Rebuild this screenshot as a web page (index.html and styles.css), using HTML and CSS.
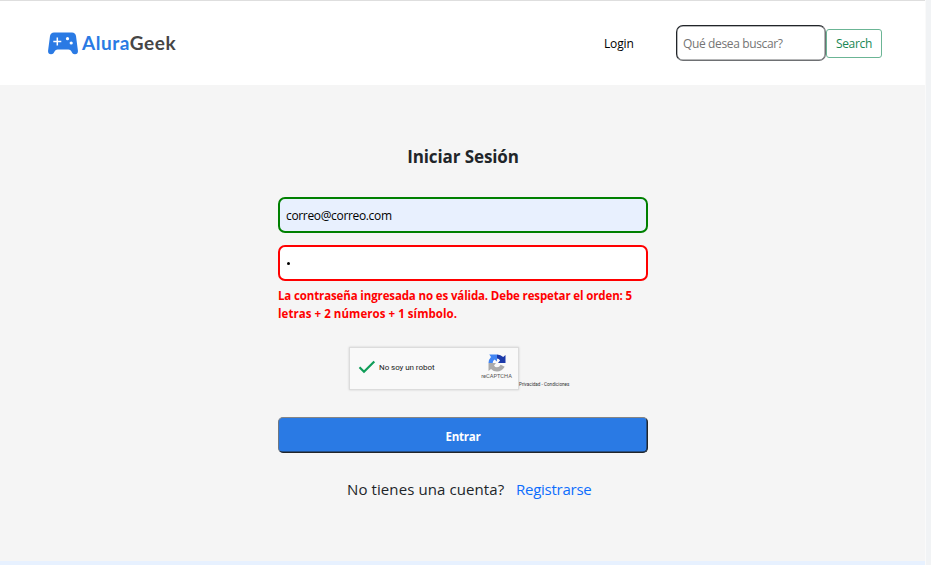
FILE: index.html
```html
<!DOCTYPE html>
<html lang="es">
<head>
<meta charset="utf-8">
<title>AluraGeek</title>
<link rel="stylesheet" href="styles.css">
</head>
<body>
<div class="page">
  <header class="header">
    <a class="logo">
      <svg class="logo-icon" width="30" height="23" viewBox="0 0 30 23">
        <path fill="#2a7ae4" d="M6 .5H24Q27.3.5 28 4L29.9 18.5Q30.3 22.3 27 22.3C24.8 22.3 24.3 21.1 23.3 19.3Q22.5 17.5 20.5 17.5H9.5Q7.5 17.5 6.700 19.300C5.700 21.100 5.200 22.300 3 22.300Q-.3 22.300.1 18.500L2 4Q2.700.5 6 .5Z"/>
        <path stroke="#fff" stroke-width="1.500" d="M9.300 5.500V13.500M5.300 9.500H13.300"/>
        <g fill="#fff"><circle cx="19.500" cy="6.700" r="1.600"/><circle cx="23.200" cy="11" r="1.600"/></g>
      </svg>
      <span class="logo-text">Alura<span class="logo-dark">Geek</span></span>
    </a>
    <a class="login">Login</a>
    <form class="search">
      <input class="search-input" type="text" placeholder="Qué desea buscar?">
      <button class="search-button" type="button">Search</button>
    </form>
  </header>
  <main class="main">
    <h1 class="title">Iniciar Sesión</h1>
    <div class="field field-valid">correo@correo.com</div>
    <div class="field field-invalid"><i class="dot"></i></div>
    <p class="error"><span class="error-first">La contraseña ingresada no es válida. Debe respetar el orden: 5</span><br><span class="error-second">letras + 2 números + 1 símbolo.</span></p>
    <div class="captcha-row">
      <div class="captcha">
        <svg class="check" width="18" height="14" viewBox="0 0 18 14"><path d="M1.500 7.300 6 11.700 16.300 1.500" fill="none" stroke="#0f9d58" stroke-width="2.200"/></svg>
        <span class="robot">No soy un robot</span>
        <span class="brand">
          <svg width="18" height="18" viewBox="0 0 18 18">
            <path fill="#1c3aa9" d="M9 .5Q12.500.4 15.200 3L17.500 1V9H10L12.100 6.500Q11 4.500 9 4.500Z"/>
            <path fill="#4285f4" d="M9 .5V7.500L6.500 5.600Q4.700 6.800 4.700 9H.5Q.5 5.500 3 3L1.300.5Z"/>
            <path fill="#ababab" d="M.5 9H8L6 11.400Q7 13.300 9 13.300Q11.300 13.300 12.700 10.800L16.700 12.800Q13.800 17.500 9 17.500Q5.500 17.500 3 15L.5 17Z"/>
          </svg>
          <span class="brand-text">reCAPTCHA</span>
        </span>
      </div>
      <span class="terms">Privacidad - Condiciones</span>
    </div>
    <button class="submit" type="button">Entrar</button>
    <p class="signup"><span class="question">No tienes una cuenta?</span><a class="register">Registrarse</a></p>
  </main>
  <footer class="footer"></footer>
</div>
</body>
</html>
```
FILE: styles.css
```css
* { box-sizing: border-box; }
body {
  margin: 0;
  background: #f1f3f5;
  font-family: "Open Sans", "Noto Sans", sans-serif;
  font-size: 12px;
  color: #212529;
}
.page {
  width: 926px;
  height: 565px;
  display: flex;
  flex-direction: column;
  background: #f5f5f5;
  border-right: 1px solid #fafafa;
}
.header {
  height: 85px;
  flex: none;
  display: flex;
  align-items: center;
  padding: 0 44px 0 48px;
  background: #fff;
  border-top: 1px solid #dedede;
}
.logo { display: flex; align-items: center; gap: 4px; width: 556px; flex: none; }
.logo-text {
  font: 700 19px/24px "Lato", sans-serif;
  letter-spacing: .55px;
  color: #2a7ae4;
}
.logo-dark { color: #464646; }
.login { width: 72px; flex: none; color: #000; letter-spacing: -.15px; }
.search { display: flex; align-items: center; flex: none; }
.search-input {
  width: 150px;
  height: 36px;
  padding: 0 6px;
  background: #fff;
  border: 1px solid;
  border-color: #212529 #6e7073 #6e7073 #212529;
  border-radius: 7px;
  box-shadow: inset 0 0 0 .5px #6e7073;
  font: inherit;
  letter-spacing: -.36px;
}
.search-input::placeholder { color: #757575; }
.search-button {
  width: 56px;
  height: 29px;
  padding: 0;
  background: #fff;
  border: 1px solid #6bb595;
  border-radius: 3px;
  font: inherit;
  letter-spacing: -.3px;
  color: #198754;
}
.main {
  flex: 1;
  width: 370px;
  margin-left: 278px;
  display: flex;
  flex-direction: column;
}
.title {
  margin: 58px 0 26px;
  font-size: 17px;
  line-height: 28px;
  font-weight: 700;
  letter-spacing: -.1px;
  text-align: center;
}
.field {
  height: 36px;
  flex: none;
  display: flex;
  align-items: center;
  padding: 0 6px;
  border: 2px solid green;
  border-radius: 7px;
  color: #000;
  letter-spacing: -.34px;
}
.field-valid { background: #e8f0fe; }
.field-invalid { margin-top: 12px; border-color: red; background: #fff; }
.dot { width: 3px; height: 3px; margin: 1px 0 0 1px; border-radius: 50%; background: #000; }
.error {
  margin: 6px 0 0;
  font-size: 11.500px;
  line-height: 18px;
  font-weight: 700;
  color: red;
  white-space: nowrap;
}
.error-first { letter-spacing: -.13px; }
.error-second { letter-spacing: .05px; }
.captcha-row { display: flex; margin: 24px 0 0 71px; height: 44px; }
.captcha {
  width: 170px;
  height: 43px;
  display: flex;
  align-items: center;
  padding-left: 8px;
  background: #f9f9f9;
  border: 1px solid #dcdcdc;
  box-shadow: 0 0 2px #ccc;
}
.check { margin-top: -3px; }
.robot { width: 102px; margin: -2px 0 0 3px; font: 8px/12px Roboto, sans-serif; letter-spacing: -.06px; color: #222; white-space: nowrap; }
.brand { display: flex; flex-direction: column; align-items: center; width: 31px; margin-top: -4px; }
.brand-text { margin-top: 1px; font: 5.700px/7px Roboto, sans-serif; color: #555; }
.terms { margin-top: 35px; font: 4.600px/6px Roboto, sans-serif; color: #333; white-space: nowrap; }
.submit {
  height: 36px;
  flex: none;
  margin-top: 26px;
  padding: 2px 0 0;
  background: #2a7ae4;
  border: 1px solid;
  border-color: #858585 #212529 #212529 #707780;
  border-radius: 5px;
  box-shadow: inset -.5px -.5px 0 #212529;
  font: 700 11.500px "Open Sans", sans-serif;
  letter-spacing: -.2px;
  color: #fff;
}
.signup { margin: 24px 0 0; padding-left: 69px; display: flex; font-size: 15px; line-height: 24px; white-space: nowrap; }
.question { width: 169px; letter-spacing: .1px; }
.register { color: #0d6efd; letter-spacing: -.25px; }
.footer { height: 4px; flex: none; background: #e7f1ff; }
```
